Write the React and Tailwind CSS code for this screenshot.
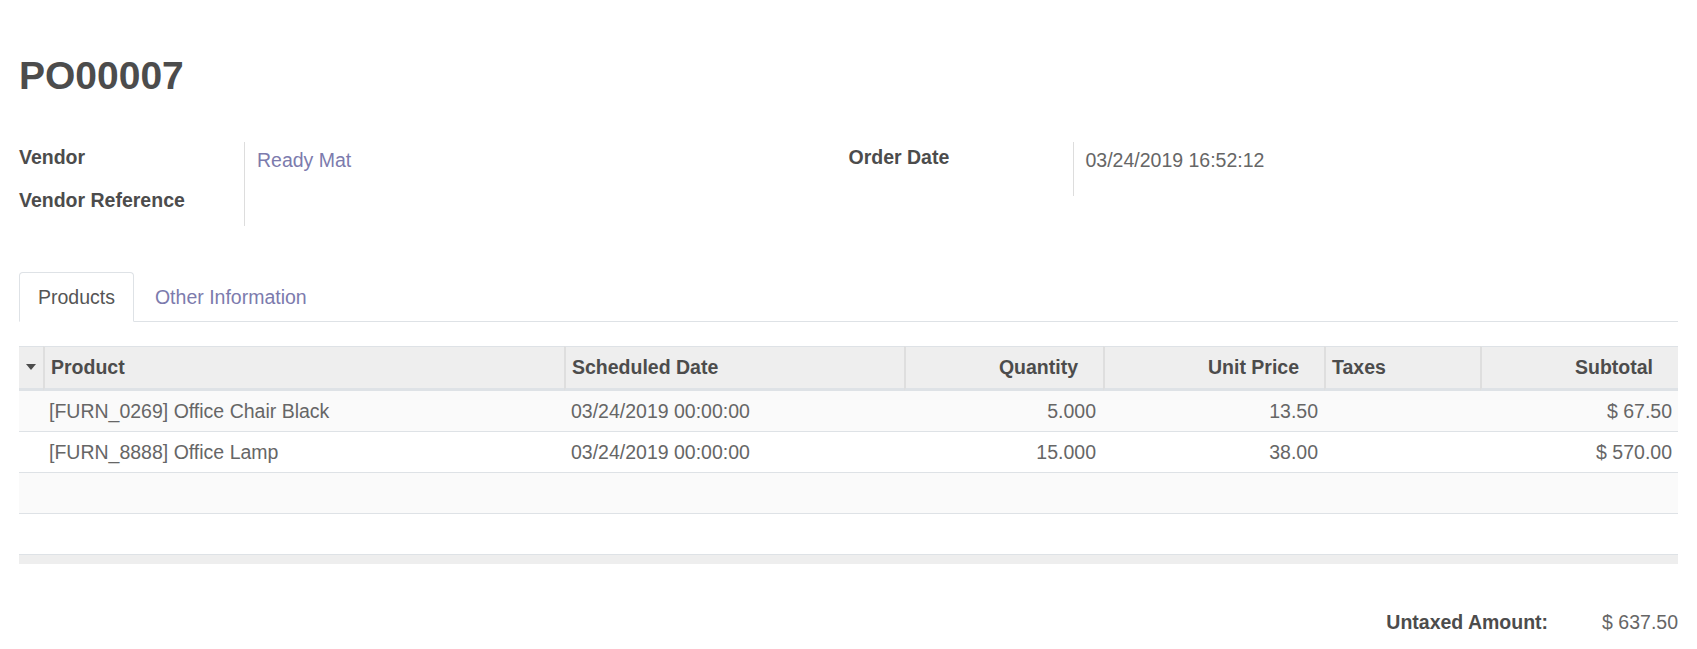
import React from 'react';

const LINES = [
  { product: '[FURN_0269] Office Chair Black', date: '03/24/2019 00:00:00', qty: '5.000', price: '13.50', taxes: '', subtotal: '$ 67.50' },
  { product: '[FURN_8888] Office Lamp', date: '03/24/2019 00:00:00', qty: '15.000', price: '38.00', taxes: '', subtotal: '$ 570.00' },
];

const font = { fontFamily: '"Liberation Sans", Arial, Helvetica, sans-serif' };

const Caret = () => (
  <svg width="10" height="6" viewBox="0 0 10 6" className="block mx-auto">
    <polygon points="0,0 10,0 5,6" fill="#4c4c4c" />
  </svg>
);

const thBase = 'bg-[#eeeeee] border-t border-b-[3px] border-[#dee2e6] pt-[9px] pb-[10px] leading-[22px] font-bold text-[#4c4c4c] whitespace-nowrap';
const thSep = 'border-l-2 border-l-[#dedede]';
const td = 'border-b border-[#dee2e6] pt-[9px] pb-[9px]';

export default function App() {
  return (
    <div className="min-h-screen bg-white px-[19px] pt-[54px] pb-10 text-[19.5px] text-[#666666]" style={font}>
      <h1 className="text-[39px] leading-[44px] font-bold text-[#4c4c4c]">PO00007</h1>

      {/* header fields */}
      <div className="mt-[44px] grid grid-cols-2">
        <div className="flex">
          <div className="w-[226px] shrink-0 border-r border-[#dddddd] pt-[4px] pb-[15px] leading-[22px] font-bold text-[#4c4c4c]">
            <div>Vendor</div>
            <div className="mt-[21px]">Vendor Reference</div>
          </div>
          <div className="pl-[12px] pt-[7px] leading-[22px]">
            <a className="text-[#7c7bad]">Ready Mat</a>
          </div>
        </div>
        <div className="flex items-start">
          <div className="w-[225px] shrink-0 border-r border-[#dddddd] pt-[4px] pb-[28px] leading-[22px] font-bold text-[#4c4c4c]">
            Order Date
          </div>
          <div className="pl-[12px] pt-[7px] leading-[22px]">03/24/2019 16:52:12</div>
        </div>
      </div>

      {/* tabs */}
      <ul className="mt-[46px] flex border-b border-[#dee2e6] leading-[22px]">
        <li className="-mb-px rounded-t-[4px] border border-[#dee2e6] border-b-white bg-white px-[18px] pt-[13px] pb-[12px] text-[#555555]">
          Products
        </li>
        <li className="border border-transparent px-[20px] pt-[13px] pb-[12px] text-[#7c7bad]">
          Other Information
        </li>
      </ul>

      {/* order lines */}
      <table className="mt-[24px] w-full table-fixed border-separate border-spacing-0">
        <colgroup>
          <col className="w-[24px]" />
          <col className="w-[521px]" />
          <col className="w-[340px]" />
          <col className="w-[199px]" />
          <col className="w-[221px]" />
          <col className="w-[156px]" />
          <col />
        </colgroup>
        <thead>
          <tr>
            <th className={`${thBase} px-0`}><Caret /></th>
            <th className={`${thBase} ${thSep} pl-[6px] text-left`}>Product</th>
            <th className={`${thBase} ${thSep} pl-[6px] text-left`}>Scheduled Date</th>
            <th className={`${thBase} ${thSep} pr-[25px] text-right`}>Quantity</th>
            <th className={`${thBase} ${thSep} pr-[25px] text-right`}>Unit Price</th>
            <th className={`${thBase} ${thSep} pl-[6px] text-left`}>Taxes</th>
            <th className={`${thBase} ${thSep} pr-[25px] text-right`}>Subtotal</th>
          </tr>
        </thead>
        <tbody className="leading-[22px]">
          {LINES.map((l, i) => (
            <tr key={i} className={i % 2 === 0 ? 'bg-[#fafafa]' : 'bg-white'}>
              <td className={td}></td>
              <td className={`${td} pl-[6px] truncate`}>{l.product}</td>
              <td className={`${td} pl-[7px]`}>{l.date}</td>
              <td className={`${td} pr-[7px] text-right`}>{l.qty}</td>
              <td className={`${td} pr-[6px] text-right`}>{l.price}</td>
              <td className={`${td} pl-[7px]`}>{l.taxes}</td>
              <td className={`${td} pr-[6px] text-right`}>{l.subtotal}</td>
            </tr>
          ))}
          {[0, 1].map((k) => (
            <tr key={`empty-${k}`} className={k === 0 ? 'bg-[#fafafa]' : 'bg-white'}>
              <td colSpan={7} className="h-[41px] border-b border-[#dee2e6]"></td>
            </tr>
          ))}
        </tbody>
        <tfoot>
          <tr>
            <td colSpan={7} className="h-[9px] bg-[#eeeeee] p-0"></td>
          </tr>
        </tfoot>
      </table>

      {/* totals */}
      <div className="mt-[47px] flex justify-end leading-[22px]">
        <span className="font-bold text-[#4c4c4c]">Untaxed Amount:</span>
        <span className="pl-[54px]">$ 637.50</span>
      </div>
    </div>
  );
}
